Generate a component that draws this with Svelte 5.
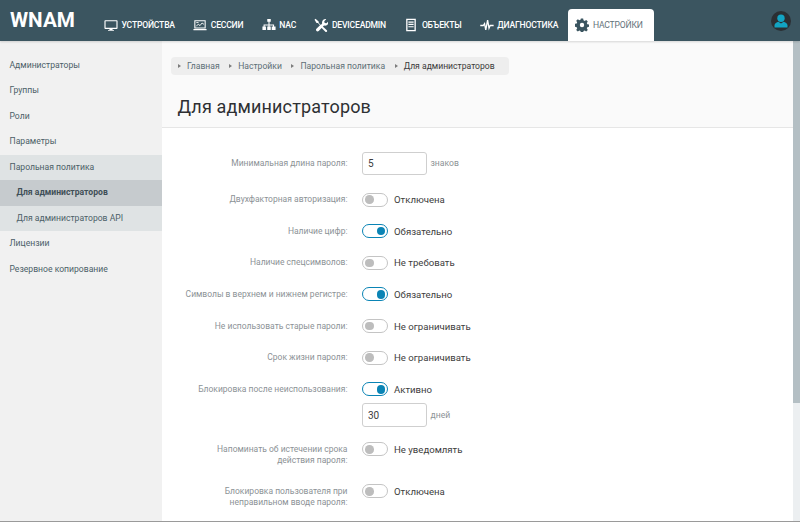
<script>
  const nav = [
    { id: "devices", name: "Устройства" },
    { id: "sessions", name: "Сессии" },
    { id: "nac", name: "NAC" },
    { id: "admin", name: "DeviceAdmin" },
    { id: "objects", name: "Объекты" },
    { id: "diag", name: "Диагностика" },
    { id: "settings", name: "Настройки", active: true }
  ];

  const side = [
    { name: "Администраторы" },
    { name: "Группы" },
    { name: "Роли" },
    { name: "Параметры" },
    { name: "Парольная политика", open: true },
    { name: "Для администраторов", sub: true, current: true },
    { name: "Для администраторов API", sub: true },
    { name: "Лицензии" },
    { name: "Резервное копирование" }
  ];

  const crumbs = ["Главная", "Настройки", "Парольная политика", "Для администраторов"];

  const rows = [
    { label: "Минимальная длина пароля:", input: "5", unit: "знаков" },
    { label: "Двухфакторная авторизация:", on: false, text: "Отключена" },
    { label: "Наличие цифр:", on: true, text: "Обязательно" },
    { label: "Наличие спецсимволов:", on: false, text: "Не требовать" },
    { label: "Символы в верхнем и нижнем регистре:", on: true, text: "Обязательно" },
    { label: "Не использовать старые пароли:", on: false, text: "Не ограничивать" },
    { label: "Срок жизни пароля:", on: false, text: "Не ограничивать" },
    { label: "Блокировка после неиспользования:", on: true, text: "Активно", input: "30", unit: "дней" },
    { label: "Напоминать об истечении срока действия пароля:", on: false, text: "Не уведомлять", tall: true },
    { label: "Блокировка пользователя при неправильном вводе пароля:", on: false, text: "Отключена", tall: true }
  ];
</script>

<div class="page">
  <header class="topbar">
    <div class="logo">WNAM</div>
    <nav class="nav">
      {#each nav as item}
        <div class="nav-item" class:active={item.active}>
          <svg class="nav-icon" viewBox="0 0 16 16" aria-hidden="true">
            {#if item.id === "devices"}
              <path fill="currentColor" fill-rule="evenodd" d="M1.500 2.500h13a1 1 0 0 1 1 1v8a1 1 0 0 1-1 1h-4.700v1.200h1.600v1h-6.800v-1h1.600v-1.200H1.500a1 1 0 0 1-1-1v-8a1 1 0 0 1 1-1zm.3 1.300v7.400h12.400V3.800z"/>
            {:else if item.id === "sessions"}
              <path fill="currentColor" fill-rule="evenodd" d="M1.500 2.500h13v9.500h-13zm1.200 1.200v7.100h10.600V3.700zM.5 12.600h15v1.400H.5z"/>
              <path fill="none" stroke="currentColor" stroke-width="1" d="M3.700 9.500l2.300-2.500 2 1.700 2.300-3 2.200 1.500M3.800 5.200h2.500"/>
            {:else if item.id === "nac"}
              <path fill="currentColor" d="M6 1h4v3.400H8.600v2.900h5.200v2.300h1.700v4.200h-4.400V9.600h1.500V8.500H8.600v1.100h1.400v4.200H6V9.600h1.400V8.500H3v1.100h1.500v4.200H.5V9.600h1.300V7.300h5.600V4.400H6z"/>
            {:else if item.id === "admin"}
              <path fill="currentColor" d="M1.700.8l3.600 3.100.2 1.700 2.300 2.300 1.500-1.500c-.4-1.800.1-3.300 1.300-4.300 1-.9 2.200-1.100 3.400-.8l-2.300 2.300.5 2 2 .5 2.200-2.300c.4 1.700-.2 3.200-1.400 4.200-1 .8-2.300 1-3.600.7l-6 6.100c-.7.7-2 .7-2.600 0-.7-.7-.7-1.800 0-2.500l4.100-4.100-2.400-2.400-1.600-.2L.6 2zM10 9.700l4.700 4.400c.5.600.4 1.300-.1 1.700-.5.400-1.100.4-1.600-.1L8.500 11z"/>
            {:else if item.id === "objects"}
              <path fill="currentColor" fill-rule="evenodd" d="M2.500.8h11v14.400h-11zm1.500 1.500v11.400h8V2.300z"/>
              <path fill="currentColor" d="M5 4h6v1.300H5zM5 6.700h6V8H5zM5 9.400h6v1.300H5z"/>
            {:else if item.id === "diag"}
              <path fill="none" stroke="currentColor" stroke-width="1.500" d="M.3 8.600h3.400l1.500-2.200 1.400 7.200L8.700 2.400l1.600 9.300 1.300-3.100h4"/>
            {:else}
              <path fill="currentColor" fill-rule="evenodd" d="M6.700.7h2.600l.4 2 1.300.6 1.800-1.100 1.800 1.800-1.100 1.800.6 1.300 2 .4v2.600l-2 .4-.6 1.300 1.100 1.800-1.800 1.800-1.800-1.100-1.300.6-.4 2H6.700l-.4-2-1.300-.6-1.800 1.100-1.800-1.800 1.100-1.800-.6-1.300-2-.4V6.700l2-.4.6-1.300-1.100-1.800 1.800-1.800 1.800 1.100 1.300-.6zM8 5.500a2.500 2.500 0 1 0 0 5 2.500 2.500 0 0 0 0-5z"/>
            {/if}
          </svg>
          <span>{item.name}</span>
        </div>
      {/each}
    </nav>
    <div class="avatar">
      <svg viewBox="0 0 20 20" aria-hidden="true">
        <circle cx="10" cy="7.200" r="3.700" fill="#12a3c2"/>
        <path fill="#12a3c2" d="M3.500 16.500v-2.300c0-1.900 2.400-3.200 3.800-3.500l2.700 1.700 2.700-1.700c1.400.3 3.800 1.600 3.800 3.500v2.300z"/>
      </svg>
    </div>
  </header>

  <div class="body">
    <aside class="sidebar">
      {#each side as item}
        <div class="side-item" class:open={item.open || item.sub} class:sub={item.sub} class:current={item.current}>{item.name}</div>
      {/each}
    </aside>

    <main class="main">
      <div class="head">
        <div class="crumbs">
          {#each crumbs as crumb, i}
            <span class="crumb" class:last={i === crumbs.length - 1}>{crumb}</span>
          {/each}
        </div>
        <h1>Для администраторов</h1>
      </div>

      <form class="form">
        {#each rows as row}
          <div class="row" class:tall={row.tall} class:plain={row.on === undefined}>
            <div class="label">{row.label}</div>
            <div class="control">
              {#if row.on !== undefined}
                <div class="switch-line">
                  <span class="switch" class:on={row.on}><i></i></span>
                  <span class="state">{row.text}</span>
                </div>
              {/if}
              {#if row.input}
                <div class="input-line">
                  <input type="text" value={row.input} />
                  <span class="unit">{row.unit}</span>
                </div>
              {/if}
            </div>
          </div>
        {/each}
      </form>
    </main>

    <div class="scrollbar"><div class="thumb"></div></div>
  </div>
</div>

<style>
  :global(body) {
    margin: 0;
    overflow: hidden;
  }

  .page {
    width: 800px;
    height: 522px;
    display: flex;
    flex-direction: column;
    overflow: hidden;
    font-family: Roboto, "Liberation Sans", sans-serif;
    box-sizing: border-box;
    border-bottom: 1px solid #9a9a9a;
  }

  .topbar {
    height: 40.5px;
    flex: none;
    display: flex;
    align-items: flex-end;
    background: #3b5560;
    color: #fff;
    position: relative;
    z-index: 1;
    box-shadow: 0 1px 2px rgba(0, 0, 0, 0.15);
  }

  .logo {
    width: 94.800px;
    padding-left: 10px;
    box-sizing: border-box;
    align-self: flex-start;
    margin-top: 9px;
    font-size: 20.700px;
    line-height: 22px;
    font-weight: 700;
  }

  .nav {
    display: flex;
    align-items: flex-end;
    height: 31.5px;
  }

  .nav-item {
    display: flex;
    align-items: center;
    gap: 3.500px;
    height: 100%;
    padding: 0 9.200px;
    box-sizing: border-box;
    font-size: 8.600px;
    letter-spacing: -0.2px;
    font-weight: 500;
    text-transform: uppercase;
    color: #fff;
    white-space: nowrap;
  }

  .nav-item.active {
    background: #fff;
    color: #63727a;
    border-radius: 4px 4px 0 0;
    padding: 0 11px 0 7px;
    font-weight: 400;
    margin-left: 1px;
  }

  .nav-item.active .nav-icon {
    color: #3b5560;
  }

  .nav-icon {
    width: 14px;
    height: 14px;
    flex: none;
  }

  .avatar {
    position: absolute;
    top: 11px;
    right: 9px;
    width: 20px;
    height: 20px;
    border-radius: 50%;
    background: #2b2f33;
  }

  .avatar svg {
    display: block;
    width: 20px;
    height: 20px;
  }

  .body {
    flex: 1;
    min-height: 0;
    display: flex;
  }

  .sidebar {
    width: 161.500px;
    flex: none;
    padding-top: 12px;
    background: #f1f1f1;
    box-sizing: border-box;
  }

  .side-item {
    height: 25.500px;
    line-height: 25.500px;
    padding-left: 9.500px;
    font-size: 8.600px;
    color: #4c5f68;
  }

  .side-item.open {
    background: #dfe3e4;
  }

  .side-item.sub {
    padding-left: 16.500px;
  }

  .side-item.current {
    background: #c6cbce;
    font-weight: 700;
    color: #3f4f57;
  }

  .main {
    flex: 1;
    min-width: 0;
    background: #fff;
  }

  .head {
    height: 87px;
    box-sizing: border-box;
    padding: 16px 0 0 9.500px;
    background: #fafafa;
    border-bottom: 1px solid #e6e6e6;
  }

  .crumbs {
    display: flex;
    width: fit-content;
    align-items: center;
    height: 18px;
    padding: 0 14px 0 7px;
    gap: 9.500px;
    background: #eeeeee;
    border-radius: 4px;
    font-size: 8.600px;
    color: #5d6e76;
  }

  .crumb {
    display: flex;
    align-items: center;
    white-space: nowrap;
  }

  .crumb::before {
    content: "";
    margin-right: 6px;
    border-left: 3px solid #7c7c7c;
    border-top: 2px solid transparent;
    border-bottom: 2px solid transparent;
  }

  .crumb.last {
    color: #3a3a3a;
  }

  h1 {
    margin: 19.500px 0 0 6.500px;
    font-size: 18px;
    line-height: 26px;
    font-weight: 400;
    color: #2e3033;
    letter-spacing: 0.15px;
  }

  .form {
    padding-top: 24px;
  }

  .row {
    display: grid;
    grid-template-columns: 186px 1fr;
    column-gap: 14.500px;
    min-height: 31.650px;
  }

  .row.plain {
    min-height: 40px;
  }

  .row.tall {
    min-height: 42px;
  }

  .label {
    text-align: right;
    font-size: 8.500px;
    line-height: 11px;
    color: #8c9296;
    padding: 2.500px 0 0 20px;
  }

  .row.plain .label {
    padding-top: 6px;
  }

  .switch-line {
    display: flex;
    align-items: center;
    gap: 6px;
    height: 16px;
  }

  .switch {
    width: 26px;
    height: 14px;
    box-sizing: border-box;
    display: flex;
    align-items: center;
    padding: 0 2px;
    border: 1.500px solid #c4c4c4;
    border-radius: 8px;
    background: #fff;
  }

  .switch i {
    width: 8.500px;
    height: 8.500px;
    border-radius: 50%;
    background: #bdbdbd;
  }

  .switch.on {
    border-color: #0a84b5;
    justify-content: flex-end;
  }

  .switch.on i {
    background: #0a84b5;
  }

  .state {
    font-size: 9.600px;
    color: #3d3d3d;
  }

  .input-line {
    display: flex;
    align-items: center;
    gap: 3.500px;
  }

  .switch-line + .input-line {
    margin: 6px 0 14.500px;
  }

  input {
    width: 65px;
    height: 23.500px;
    box-sizing: border-box;
    padding: 0 5px;
    border: 1px solid #cfcfcf;
    border-radius: 3px;
    background: #fff;
    font: 400 10px Roboto, "Liberation Sans", sans-serif;
    color: #3d3d3d;
    outline: none;
  }

  .unit {
    font-size: 8.600px;
    color: #8c9296;
  }

  .scrollbar {
    width: 7px;
    flex: none;
    background: #eceff1;
  }

  .thumb {
    height: 362px;
    background: #b4bfc4;
  }
</style>
